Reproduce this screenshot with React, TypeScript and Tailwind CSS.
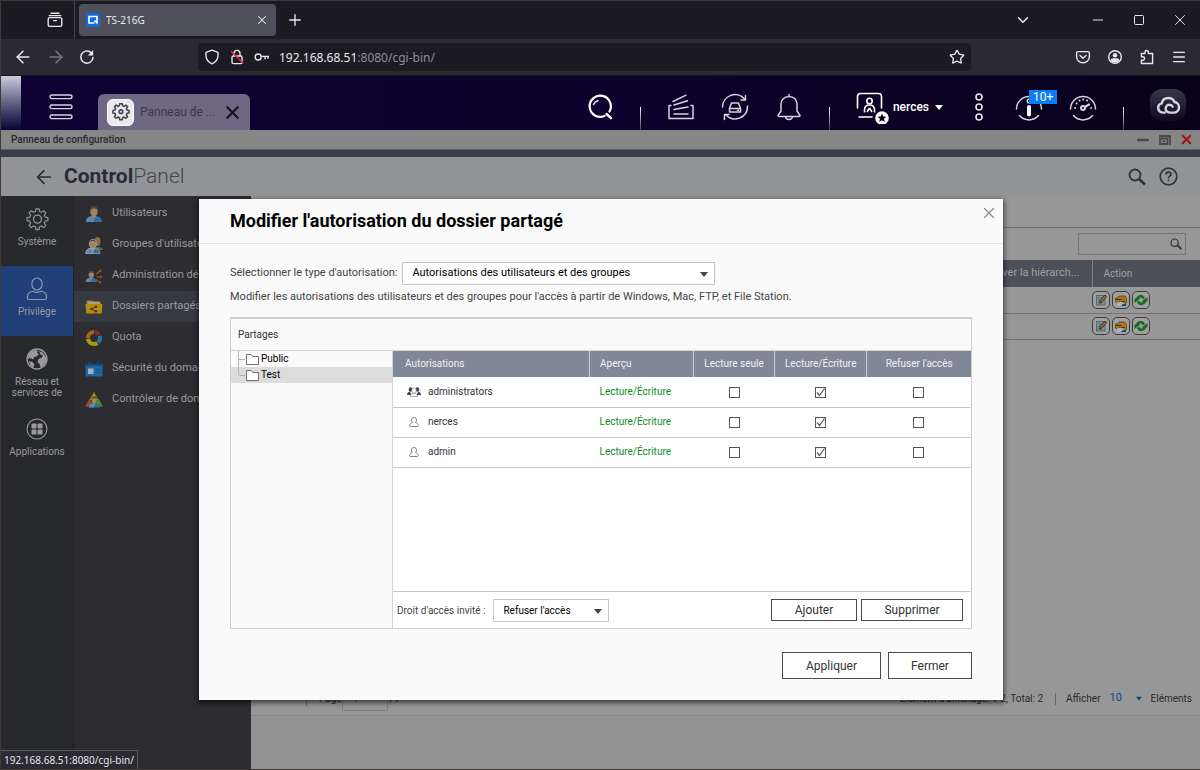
import { useState } from "react";
import type { ReactNode } from "react";
import {
  ArrowLeft,
  ArrowRight,
  ChevronDown,
  Menu,
  Minus,
  Plus,
  Square,
  Star,
  X,
} from "lucide-react";

type Member = {
  name: string;
  group?: boolean;
};

const members: Member[] = [
  { name: "administrators", group: true },
  { name: "nerces" },
  { name: "admin" },
];

/* ---------- browser icons ---------- */

function RecentIcon() {
  return (
    <svg width="16" height="16" viewBox="0 0 16 16" fill="none" stroke="currentColor" strokeWidth="1.4">
      <path d="M4 1.2h8M2.2 3.6h11.6" strokeLinecap="round" />
      <rect x="1.2" y="5.6" width="13.6" height="8.8" rx="1.6" />
      <path d="M6.6 8.6h2.8" strokeLinecap="round" />
    </svg>
  );
}

function ReloadIcon() {
  return (
    <svg width="16" height="16" viewBox="0 0 16 16" fill="none" stroke="currentColor" strokeWidth="1.5">
      <path d="M14 8.4A6.1 6.1 0 1 1 11.6 3.2" strokeLinecap="round" />
      <path d="M14.2 1v5.4H8.8z" fill="currentColor" stroke="none" />
    </svg>
  );
}

function ShieldIcon() {
  return (
    <svg width="16" height="16" viewBox="0 0 16 16" fill="none" stroke="currentColor" strokeWidth="1.4">
      <path d="M8 1.2 14 3.4v3.2c0 3.8-2.4 6.6-6 8.2-3.6-1.6-6-4.4-6-8.2V3.4z" strokeLinejoin="round" />
    </svg>
  );
}

function InsecureIcon() {
  return (
    <svg width="16" height="16" viewBox="0 0 16 16" fill="none" stroke="currentColor" strokeWidth="1.4">
      <path d="M5 7V4.4a3 3 0 0 1 6 0V7" />
      <rect x="3" y="7" width="10" height="7.6" rx="1.4" />
      <path d="M2.4 2.6 14 14" stroke="#e22850" strokeWidth="1.5" strokeLinecap="round" />
    </svg>
  );
}

function KeyIcon() {
  return (
    <svg width="16" height="16" viewBox="0 0 16 16" fill="none" stroke="currentColor" strokeWidth="1.4">
      <circle cx="4.2" cy="8" r="3" />
      <path d="M7.2 7.4H15M11 7.4v2.8M14 7.4v2.4" />
    </svg>
  );
}

function PocketIcon() {
  return (
    <svg width="16" height="16" viewBox="0 0 16 16" fill="none" stroke="currentColor" strokeWidth="1.4">
      <path d="M3 2.6h10c.8 0 1.4.6 1.4 1.4v3.4a6.4 6.4 0 0 1-12.8 0V4c0-.8.6-1.4 1.4-1.4z" />
      <path d="m5 6.4 3 2.8 3-2.8" strokeLinecap="round" />
    </svg>
  );
}

function AccountIcon() {
  return (
    <svg width="16" height="16" viewBox="0 0 16 16" fill="none" stroke="currentColor" strokeWidth="1.4">
      <circle cx="8" cy="8" r="6.3" />
      <circle cx="8" cy="6.2" r="2.2" fill="currentColor" stroke="none" />
      <path d="M3.8 11.4c0-1.4 1-2.2 2.2-2.2h4c1.2 0 2.2.8 2.2 2.2-1 1.2-2.4 2-4.2 2s-3.2-.8-4.2-2z" fill="currentColor" stroke="none" />
    </svg>
  );
}

function PuzzleIcon() {
  return (
    <svg width="16" height="16" viewBox="0 0 16 16" fill="none" stroke="currentColor" strokeWidth="1.4">
      <path
        d="M6 4.5V3.2a1.7 1.7 0 0 1 3.4 0v1.3h4.2v10H2.4v-3.3h1.5a1.7 1.7 0 0 0 0-3.4H2.4V4.5z"
        strokeLinejoin="round"
      />
    </svg>
  );
}

/* ---------- desktop bar icons ---------- */

function DeskIcon({ children }: { children: ReactNode }) {
  return (
    <svg
      width="28"
      height="28"
      viewBox="0 0 28 28"
      fill="none"
      stroke="currentColor"
      strokeWidth="1.5"
      strokeLinecap="round"
      strokeLinejoin="round"
    >
      {children}
    </svg>
  );
}

function DeskSearch() {
  return (
    <DeskIcon>
      <path d="M23.5 18.5A10.6 10.6 0 1 0 18.5 23" stroke="#fff" strokeWidth="2.2" />
      <path d="M20.5 21 25 25.2" stroke="#fff" strokeWidth="2.4" />
      <path d="M7.5 11.5A6.5 6.5 0 0 1 12 7.6" strokeWidth="1.6" />
    </DeskIcon>
  );
}

function DeskStack() {
  return (
    <DeskIcon>
      <path d="M4 12.5H2v13h24v-13h-2" />
      <path d="M6 8.5 19 2.2M7 12l13.5-4.2M7 16.5l14-2.5M7 21h14" />
    </DeskIcon>
  );
}

function DeskSync() {
  return (
    <DeskIcon>
      <path d="M1.5 14A12.5 12.5 0 0 1 23.5 6M24.5 2.5v4.6h-4.6" />
      <path d="M26.5 13A12.5 12.5 0 0 1 5 22M3.5 26.4v-4.8h4.6" />
      <path d="M8.5 15.5 10.5 10h7l2 5.5V19h-11z" />
      <path d="M8.5 15.5h11M16.5 17.3h1" />
    </DeskIcon>
  );
}

function DeskBell() {
  return (
    <DeskIcon>
      <path d="M14 1.5v2M14 3.5c-5 0-8 3.5-8 8V18l-3 4.5c0 .6.3 1 1 1h20c.7 0 1-.4 1-1L22 18v-6.5c0-4.5-3-8-8-8z" />
      <path d="M10.5 24c.5 1.5 1.8 2.4 3.5 2.4s3-.9 3.5-2.4" />
    </DeskIcon>
  );
}

function DeskUser() {
  return (
    <svg width="33" height="34" viewBox="0 0 33 34" fill="none" stroke="currentColor" strokeWidth="1.6">
      <path d="M1.5 18V6.5c0-2 1-3 3-3h18c2 0 3 1 3 3V18M3 27h13" strokeLinecap="round" />
      <circle cx="13.5" cy="11" r="2.7" />
      <path d="M8.5 22.5V20c0-3 2-5 5-5s5 2 5 5v2.5M13.5 18 11 22M13.5 18l2.5 4" />
      <circle cx="26" cy="28" r="6" fill="#fff" stroke="#fff" />
      <path
        d="m26 23.500 1.300 3 3.200.2-2.500 2.100.9 3.200-2.900-1.800-2.900 1.800.9-3.200-2.500-2.100 3.200-.2z"
        fill="#0a0128"
        stroke="none"
      />
    </svg>
  );
}

function DeskInfo() {
  return (
    <DeskIcon>
      <path d="M1.5 16A12.5 12.5 0 0 1 26.5 16M4.5 22.5a12.5 12.5 0 0 0 19 0" />
      <path d="M14 14v7.5" stroke="#fff" strokeWidth="4" />
      <circle cx="14" cy="8" r="1.8" />
    </DeskIcon>
  );
}

function DeskGauge() {
  return (
    <DeskIcon>
      <path d="M1.5 16A12.5 12.5 0 0 1 26.5 16M4.5 22.5a12.5 12.5 0 0 0 19 0" />
      <circle cx="14" cy="15" r="2" strokeWidth="2" />
      <path d="m16 14 4-2.5" strokeWidth="2.2" />
      <path d="M6 15h.2M7.5 10.5h.2M10.5 7.5h.2M14 6.500h.2M18 7.500h.2M22 15h.2" strokeWidth="1.8" />
    </DeskIcon>
  );
}

function CloudIcon() {
  return (
    <svg width="25" height="19" viewBox="0 0 26 20" fill="none" stroke="#d6d4dc" strokeWidth="2.6" strokeLinecap="round">
      <path d="M9 17.5H7a5 5 0 0 1-1.2-9.8C6.500 4.200 9.300 2 12.800 2c3 0 5.500 1.700 6.600 4.400a5.600 5.600 0 0 1-.4 11.100h-3.500c-3.500 0-5.500-1.700-5.500-4.300 0-2.400 1.800-4 4-4 1.700 0 2.800.8 3.300 2" />
    </svg>
  );
}

function Divider() {
  return <span className="mt-6 h-6 w-px bg-gradient-to-b from-white to-white/20" />;
}

/* ---------- control panel icons ---------- */

function Gear({ size, color, bold = false }: { size: number; color: string; bold?: boolean }) {
  return (
    <svg
      width={size}
      height={size}
      viewBox="0 0 24 24"
      fill="none"
      stroke={color}
      strokeWidth={bold ? 2.2 : 1.4}
      strokeLinejoin="round"
    >
      <path d="M10.300 1.500h3.400l.6 3 2 .9 2.600-1.700 2.400 2.400-1.700 2.600.9 2 3 .6v3.400l-3 .6-.9 2 1.700 2.600-2.400 2.400-2.600-1.700-2 .9-.6 3h-3.400l-.6-3-2-.9-2.600 1.700-2.400-2.400 1.700-2.600-.9-2-3-.6v-3.400l3-.6.9-2-1.700-2.600 2.400-2.400 2.600 1.700 2-.9z" transform="translate(.7 -.6) scale(.94)" />
      <circle cx="12" cy="11.600" r={bold ? 2.4 : 4.2} />
    </svg>
  );
}

function PersonOutline() {
  return (
    <svg width="22" height="24" viewBox="0 0 22 24" fill="none" stroke="#8b99b5" strokeWidth="1.2">
      <ellipse cx="11" cy="7" rx="5.2" ry="6" />
      <path d="M1.500 21v-1.500c0-3 2-4.500 4.500-5 1.600-.3 2.500.8 5 .8s3.400-1.100 5-.8c2.500.5 4.500 2 4.500 5V21c0 1-.5 1.500-1.500 1.500H3c-1 0-1.500-.5-1.500-1.500z" />
    </svg>
  );
}

function Globe() {
  return (
    <svg width="22" height="22" viewBox="0 0 22 22">
      <circle cx="11" cy="11" r="10" fill="#28292c" stroke="#9a9a9b" strokeWidth="1.4" />
      <path d="M4 4.500 8 2l4 .5-1 2.500 2 1-2.500 2.500L8 9l-.5 2.500L4.500 10 2 11c0-2.500.5-4.500 2-6.500zM13 3l3.500 1.500L20 9l.5 4-2.500 4-3 3-1.500-4-2-2 1-3 3.500-1.500 1-2-2.500-1zM3 13l3.500 1 2 2.500L7 20c-2-1.500-3.500-3.500-4-7z" fill="#9a9a9b" />
    </svg>
  );
}

function AppsIcon() {
  return (
    <svg width="22" height="22" viewBox="0 0 22 22" fill="#9a9a9b">
      <circle cx="11" cy="11" r="10" fill="none" stroke="#9a9a9b" strokeWidth="1.1" />
      <rect x="5.5" y="5.5" width="5" height="5" rx=".8" />
      <rect x="11.5" y="5.5" width="5" height="5" rx=".8" />
      <rect x="5.5" y="11.5" width="5" height="5" rx=".8" />
      <rect x="11.5" y="11.5" width="5" height="5" rx=".8" />
    </svg>
  );
}

function Figure() {
  return (
    <>
      <path d="M1 17c0-4 2.500-6 8-6s8 2 8 6z" fill="#2f6ea3" />
      <path d="M1 17c0-4 2.500-6 8-6v6z" fill="#5b87ab" />
      <path d="m6.500 11 2.500 3 2.500-3z" fill="#9a8468" />
      <ellipse cx="9" cy="6.500" rx="3.800" ry="4.800" fill="#9a8468" />
      <path d="M5 6c0-3.500 1.500-5 4-5s4 1.500 4 5c-1-1.500-2-2.500-4-2.500S6 4.500 5 6z" fill="#60452c" />
    </>
  );
}

function UserIcon() {
  return (
    <svg width="18" height="18" viewBox="0 0 18 18">
      <Figure />
    </svg>
  );
}

function GroupIcon() {
  return (
    <svg width="18" height="18" viewBox="0 0 18 18">
      <path d="M10 11c5 0 8 1 8 3h-6z" fill="#4c7a2a" />
      <ellipse cx="12.5" cy="5.5" rx="3" ry="4.5" fill="#8c6a42" />
      <g transform="translate(0 2.5) scale(.88)" stroke="#a9aaa8" strokeWidth=".8">
        <Figure />
      </g>
    </svg>
  );
}

function DelegateIcon() {
  return (
    <svg width="18" height="18" viewBox="0 0 18 18">
      <g transform="translate(0 3) scale(.7)">
        <Figure />
      </g>
      <g stroke="#9c5a17" strokeWidth="1.2" fill="#9c5a17">
        <path d="m11 7 4.500-3.500M11.500 10H16M11 12.500l4.500 3" />
        <path d="m16.500 2.500-.5 2.800-2-2.300zM17.500 10l-2.200 1.500v-3zM16.500 16.500l-2.600-.5 1.700-2z" stroke="none" />
      </g>
    </svg>
  );
}

function SharedFolderIcon() {
  return (
    <svg width="18" height="18" viewBox="0 0 18 18">
      <path d="M1.500 2.500H7L8.500 4H16v5H1.500z" fill="#a07a18" />
      <path d="M2.500 3.500h12v3h-12z" fill="#b09a80" />
      <path d="M.5 6h17l-.8 9.500H1.300z" fill="#b48c12" />
      <path d="m11 8.800-4.500 2.200 4.500 2.200" fill="none" stroke="#4a3608" />
      <g fill="#4a3608">
        <circle cx="11" cy="8.8" r="1.3" />
        <circle cx="6.5" cy="11" r="1.3" />
        <circle cx="11" cy="13.2" r="1.3" />
      </g>
    </svg>
  );
}

function QuotaIcon() {
  return (
    <svg width="18" height="18" viewBox="0 0 18 18" fill="none" strokeWidth="4">
      <path d="M9 3a6 6 0 0 0-6 6" stroke="#a8641c" />
      <path d="M9.800 3A6 6 0 0 1 13.800 5.500" stroke="#922626" />
      <path d="M14.500 6.800a6 6 0 0 1-1.500 6.700" stroke="#23779b" />
      <path d="M12.300 14A6 6 0 0 1 3 9.800" stroke="#a59a12" />
    </svg>
  );
}

function DomainIcon() {
  return (
    <svg width="18" height="18" viewBox="0 0 18 18">
      <path d="M3 1.500h3v4H3zM12 1.500h3v4h-3z" fill="#163f63" />
      <path d="M.5 4h17v12.500H.5z" fill="#1f66a4" />
      <path d="M.5 4h17v2H.5z" fill="#174d7e" />
      <path d="M3 8.500h5.500V14H3z" fill="#9db0bf" />
      <path d="M10.500 9.500h5M10.500 12h5" stroke="#1b5789" />
    </svg>
  );
}

function ControllerIcon() {
  return (
    <svg width="18" height="18" viewBox="0 0 18 18">
      <path d="M9 1 13.500 9h-9z" fill="#a38f16" />
      <path d="m4.500 7.500 4.500 8H0z" fill="#9a4d18" />
      <path d="m13.500 7.500 4.500 8H9z" fill="#4f8a22" />
      <g transform="translate(3 4.500) scale(.7)">
        <Figure />
      </g>
    </svg>
  );
}

function Magnifier({ size }: { size: number }) {
  return (
    <svg width={size} height={size} viewBox="0 0 18 18" fill="none" stroke="#303238">
      <circle cx="7" cy="7" r="5.5" strokeWidth="1.8" />
      <path d="m11 11 6 5.500" strokeWidth="2.6" />
    </svg>
  );
}

function Caret({ className }: { className?: string }) {
  return (
    <svg width="8" height="5" viewBox="0 0 8 5" className={className} fill="currentColor">
      <path d="M0 0h8L4 5z" />
    </svg>
  );
}

/* ---------- list actions ---------- */

function ActionButton({ label, children }: { label: string; children: ReactNode }) {
  return (
    <button
      type="button"
      aria-label={label}
      className="flex size-[18px] items-center justify-center rounded-[5px] border border-[#3d3d3d] bg-[#a0a0a0]"
    >
      <svg width="14" height="14" viewBox="0 0 14 14">
        {children}
      </svg>
    </button>
  );
}

function RowActions() {
  return (
    <div className="flex gap-[2px]">
      <ActionButton label="Modifier">
        <rect x="2.500" y="2.500" width="8.500" height="9.500" fill="#7c9098" stroke="#4f6a75" />
        <path d="M4 5h4M4 7.500h3M4 10h4" stroke="#4f7282" />
        <path d="m5.500 10 .7-2.700L11 2l1.700 1.500-4.800 5.500z" fill="#a36a1e" stroke="#2d2212" strokeWidth=".8" />
      </ActionButton>
      <ActionButton label="Autorisations">
        <path d="M1.500 5h2.500l1-2h6l1.500 2.500v4.500l-3 2H6l-4.500-3z" fill="#a8741c" stroke="#4f3a12" strokeWidth=".7" />
        <path d="M1.500 6.500h6M5 8.500h6" stroke="#4a3510" />
        <path d="m3 9.500 4-1 4 2.500-4 2H3z" fill="#a9b3bb" />
        <path d="M9 11h3v2H7z" fill="#24476e" />
      </ActionButton>
      <ActionButton label="Actualiser">
        <path d="M3 6.500C4 2.500 8 2 10 5.500M11 7.500c-1 4-5 4.500-7 1" fill="none" stroke="#166a22" strokeWidth="2.600" />
        <path d="M13.500 4v4.500H7.500zM.5 10V5.500h6z" fill="#166a22" />
      </ActionButton>
    </div>
  );
}

/* ---------- dialog pieces ---------- */

function FolderIcon() {
  return (
    <svg width="13" height="11" viewBox="0 0 13 11" fill="#fff" stroke="#707070">
      <path d="M.5.5H5l1.500 2h6v8H.5z" />
    </svg>
  );
}

function MemberIcon({ group }: { group?: boolean }) {
  if (group) {
    return (
      <svg width="14" height="10" viewBox="0 0 14 10">
        <ellipse cx="3.500" cy="2.500" rx="1.800" ry="2.200" fill="#444" />
        <ellipse cx="10.500" cy="2.500" rx="1.800" ry="2.200" fill="#444" />
        <path d="M0 8c0-2 1-3 3-3.200L4.500 8zM14 8c0-2-1-3-3-3.200L9.500 8z" fill="#444" />
        <ellipse cx="7" cy="3.500" rx="2.200" ry="2.700" fill="#fff" stroke="#888" strokeWidth=".7" />
        <path d="M3.500 9.500c0-2 1-3 3.500-3s3.500 1 3.500 3z" fill="#fff" stroke="#888" strokeWidth=".7" />
      </svg>
    );
  }
  return (
    <svg width="14" height="10" viewBox="0 0 14 10" fill="none" stroke="#777" strokeWidth=".9">
      <path d="M5.500 5.500C4.800 4.800 4.500 4 4.500 3a2.500 2.500 0 0 1 5 0c0 1-.3 1.800-1 2.500 1.800.5 2.800 1.300 2.800 3 0 .7-.3 1-.8 1h-7c-.5 0-.8-.3-.8-1 0-1.700 1-2.500 2.800-3z" />
    </svg>
  );
}

function Tick({ label, initial = false }: { label: string; initial?: boolean }) {
  const [on, setOn] = useState(initial);
  return (
    <span className="relative inline-block size-[11px] align-middle">
      <input
        type="checkbox"
        aria-label={label}
        checked={on}
        onChange={() => setOn(!on)}
        className="block size-[11px] appearance-none border border-[#555] bg-white"
      />
      {on && (
        <svg viewBox="0 0 11 11" className="pointer-events-none absolute inset-0" fill="none" stroke="#555" strokeWidth="1.2">
          <path d="M2 5.500 4.500 8.500 9.500 1.500" />
        </svg>
      )}
    </span>
  );
}

const th = "border-l border-[#c9ccd2] text-center font-normal";

function PermissionTable() {
  return (
    <table className="w-full table-fixed border-collapse text-[10px] leading-4 text-[#333]">
      <colgroup>
        <col className="w-[34%]" />
        <col className="w-[18%]" />
        <col className="w-[14%]" />
        <col className="w-[16%]" />
        <col className="w-[18%]" />
      </colgroup>
      <thead>
        <tr className="h-[26px] bg-[#808797] text-[#f0f1f3]">
          <th className="pl-3 text-left font-normal">Autorisations</th>
          <th className="border-l border-[#c9ccd2] pl-[10px] text-left font-normal">Aperçu</th>
          <th className={th}>Lecture seule</th>
          <th className={th}>Lecture/Écriture</th>
          <th className={th}>Refuser l'accès</th>
        </tr>
      </thead>
      <tbody>
        {members.map((m) => (
          <tr key={m.name} className="h-[30px] border-b border-[#c8c8c8]">
            <td className="pl-[14px]">
              <span className="flex items-center gap-[7px]">
                <MemberIcon group={m.group} />
                {m.name}
              </span>
            </td>
            <td className="pl-[10px] text-[#0c8c1c]">Lecture/Écriture</td>
            <td className="text-center">
              <Tick label={`Lecture seule ${m.name}`} />
            </td>
            <td className="text-center">
              <Tick label={`Lecture/Écriture ${m.name}`} initial />
            </td>
            <td className="text-center">
              <Tick label={`Refuser l'accès ${m.name}`} />
            </td>
          </tr>
        ))}
      </tbody>
    </table>
  );
}

const outlined = "border border-[#4a4a4a] bg-white text-xs text-[#333]";

function PermissionDialog() {
  return (
    <div
      role="dialog"
      aria-labelledby="dialog-title"
      className="w-full max-w-[804px] bg-[#fafafa] pb-[21px] text-[#444] shadow-[0_2px_5px_1px_rgba(0,0,0,0.6)]"
    >
      <div className="flex h-[45px] items-center justify-between border-b border-[#e4e4e4] pl-[31px] pr-[5px]">
        <h2 id="dialog-title" className="text-lg font-bold text-black">
          Modifier l'autorisation du dossier partagé
        </h2>
        <button type="button" aria-label="Fermer la fenêtre" className="mb-4 text-[#888]">
          <X size={18} strokeWidth={1.5} />
        </button>
      </div>

      <div className="px-[31px] pt-[18px] text-[11px]">
        <div className="flex items-center gap-[5px]">
          <label htmlFor="type">Sélectionner le type d'autorisation:</label>
          <div className="relative w-[313px]">
            <select
              id="type"
              className="block h-[23px] w-full appearance-none border border-[#c4c4c4] bg-white pl-[9px] text-[11px] text-black"
            >
              <option>Autorisations des utilisateurs et des groupes</option>
            </select>
            <Caret className="pointer-events-none absolute right-[7px] top-[10px] text-[#444]" />
          </div>
        </div>
        <p className="h-6 leading-6">
          Modifier les autorisations des utilisateurs et des groupes pour l'accès à partir de Windows, Mac, FTP, et File
          Station.
        </p>

        <div className="mt-2 border border-t-2 border-[#cfcfcf] text-[10px]">
          <div className="h-8 border-b border-[#d4d4d4] pl-[7px] leading-8 text-[#333]">Partages</div>
          <div className="flex">
            <ul className="w-[161px] shrink-0 leading-4 text-black">
              <li className="flex h-4 items-center pl-[7px]">
                <span className="h-full w-px bg-[#b5b5b5]" />
                <span className="mr-px h-px w-[6px] bg-[#b5b5b5]" />
                <FolderIcon />
                <span className="ml-[2px]">Public</span>
              </li>
              <li className="flex h-4 items-center bg-[#dcdcdc] pl-[7px]">
                <span className="h-2 w-px self-start bg-[#b5b5b5]" />
                <span className="mr-px h-px w-[6px] bg-[#b5b5b5]" />
                <FolderIcon />
                <span className="ml-[2px]">Test</span>
              </li>
            </ul>
            <div className="min-w-0 flex-1 border-l border-[#d4d4d4] bg-white">
              <div className="h-[240px]">
                <PermissionTable />
              </div>
              <div className="flex h-[37px] items-center border-t border-[#c8c8c8] pl-1 pr-2">
                <label htmlFor="guest">Droit d'accès invité :</label>
                <div className="relative ml-2 w-[116px]">
                  <select
                    id="guest"
                    className="block h-[23px] w-full appearance-none border border-[#c4c4c4] bg-white pl-[9px] text-[10px] text-black"
                  >
                    <option>Refuser l'accès</option>
                  </select>
                  <Caret className="pointer-events-none absolute right-[7px] top-[10px] text-[#444]" />
                </div>
                <button type="button" className={`${outlined} ml-auto h-[22px] w-[86px]`}>
                  Ajouter
                </button>
                <button type="button" className={`${outlined} ml-1 h-[22px] w-[102px]`}>
                  Supprimer
                </button>
              </div>
            </div>
          </div>
        </div>

        <div className="mt-[23px] flex justify-end gap-[7px]">
          <button type="button" className={`${outlined} h-[27px] w-[99px]`}>
            Appliquer
          </button>
          <button type="button" className={`${outlined} h-[27px] w-[84px]`}>
            Fermer
          </button>
        </div>
      </div>
    </div>
  );
}

/* ---------- page sections ---------- */

function BrowserChrome() {
  return (
    <header className="font-['Noto_Sans',sans-serif] text-[#e8e8ec]">
      <div className="flex h-[38px] items-center bg-[#1c1b22]">
        <button type="button" aria-label="Onglets récents" className="flex h-full w-[74px] items-center justify-end border-r border-[#45444d] pr-[11px]">
          <RecentIcon />
        </button>
        <div className="ml-1 flex h-8 w-[197px] items-center rounded bg-[#50505c] px-[7px] text-[10px]">
          <svg width="14" height="14" viewBox="0 0 14 14">
            <rect width="14" height="14" rx="2.5" fill="#0c6be0" />
            <path d="M8.500 10H3V3.500h8V9.500M8.500 7.500l3 3" fill="none" stroke="#fff" strokeWidth="1.6" />
          </svg>
          <span className="ml-[6px]">TS-216G</span>
          <button type="button" aria-label="Fermer l'onglet" className="ml-auto">
            <X size={14} strokeWidth={1.8} />
          </button>
        </div>
        <button type="button" aria-label="Nouvel onglet" className="ml-[10px]">
          <Plus size={18} strokeWidth={1.8} />
        </button>
        <div className="ml-auto flex items-center pr-3">
          <button type="button" aria-label="Lister les onglets" className="mr-[58px]">
            <ChevronDown size={18} />
          </button>
          <div className="flex gap-[25px]">
            <button type="button" aria-label="Réduire">
              <Minus size={16} strokeWidth={1.5} />
            </button>
            <button type="button" aria-label="Agrandir">
              <Square size={12} strokeWidth={2} className="mx-[2px]" />
            </button>
            <button type="button" aria-label="Fermer">
              <X size={18} strokeWidth={1.3} className="-mx-px" />
            </button>
          </div>
        </div>
      </div>

      <div className="flex h-[37px] items-center border-b border-[#15141a] bg-[#2b2a33] pl-3 pr-[13px]">
        <div className="flex items-center gap-[13px]">
          <button type="button" aria-label="Précédent">
            <ArrowLeft size={20} strokeWidth={1.8} />
          </button>
          <button type="button" aria-label="Suivant" className="text-[#77767e]">
            <ArrowRight size={20} strokeWidth={1.8} />
          </button>
          <button type="button" aria-label="Recharger">
            <ReloadIcon />
          </button>
        </div>
        <div className="ml-[103px] mr-[104px] flex h-7 flex-1 items-center gap-[9px] rounded bg-[#1c1b22] px-[6px]">
          <ShieldIcon />
          <InsecureIcon />
          <KeyIcon />
          <a href="#" className="pt-px text-xs text-[#e8e8ec]">
            192.168.68.51<span className="text-[#8f8e97]">:8080/cgi-bin/</span>
          </a>
          <Star size={16} className="ml-auto" />
        </div>
        <div className="flex gap-4">
          <PocketIcon />
          <AccountIcon />
          <PuzzleIcon />
          <Menu size={16} />
        </div>
      </div>
    </header>
  );
}

function DesktopBar() {
  return (
    <div className="flex h-[54px] items-center bg-gradient-to-r from-[#0d0233] via-[#0d022d] to-[#08011b] text-[#d5d3dd]">
      <div className="h-full w-5 bg-gradient-to-b from-[#cfccdc] to-[#0d0233]" />
      <button type="button" aria-label="Menu principal" className="ml-7 mt-2">
        <svg width="24" height="26" viewBox="0 0 24 26" fill="none" stroke="currentColor" strokeWidth="1.4">
          <rect x="1" y="1" width="22" height="3.6" rx="1.8" />
          <rect x="1" y="11" width="22" height="3.6" rx="1.8" />
          <rect x="1" y="21" width="22" height="3.6" rx="1.8" />
        </svg>
      </button>
      <div className="ml-[25px] flex h-9 w-[152px] items-center self-end rounded-t-md bg-[#6f6884] px-[9px]">
        <span className="flex size-[27px] items-center justify-center rounded-md border border-white bg-[#e9e9ee]">
          <Gear size={18} color="#43454c" bold />
        </span>
        <span className="ml-[6px] text-xs text-[#3b3747]">Panneau de ...</span>
        <button type="button" aria-label="Fermer l'application" className="-mr-[2px] ml-auto text-[#15131d]">
          <X size={21} strokeWidth={2.5} />
        </button>
      </div>

      <div className="ml-auto flex h-full items-center gap-[26px] pr-[14px] pt-2">
        <DeskSearch />
        <Divider />
        <DeskStack />
        <DeskSync />
        <DeskBell />
        <Divider />
        <button type="button" className="flex items-center gap-1 text-xs font-medium text-white">
          <DeskUser />
          nerces
          <Caret className="ml-[2px]" />
        </button>
        <svg width="20" height="28" viewBox="0 0 20 28" fill="none" stroke="#e6e4ee" strokeWidth="1.6">
          <circle cx="10" cy="4" r="3" />
          <circle cx="10" cy="14" r="3" />
          <circle cx="10" cy="24" r="3" />
        </svg>
        <span className="relative">
          <DeskInfo />
          <span className="absolute -top-[3px] left-[14px] h-[14px] bg-[#0a7cf5] px-1 text-xs leading-[14px] text-white">
            10+
          </span>
        </span>
        <DeskGauge />
        <Divider />
        <span className="-mt-1 flex h-8 w-9 items-center justify-center rounded-xl bg-gradient-to-b from-[#3b3748] to-[#0f0822]">
          <CloudIcon />
        </span>
      </div>
    </div>
  );
}

const rail: { label: string; icon: ReactNode; active?: boolean }[] = [
  { label: "Système", icon: <Gear size={23} color="#929393" /> },
  { label: "Privilège", icon: <PersonOutline />, active: true },
  { label: "Réseau et services de", icon: <Globe /> },
  { label: "Applications", icon: <AppsIcon /> },
];

const submenu: { label: string; icon: ReactNode; active?: boolean }[] = [
  { label: "Utilisateurs", icon: <UserIcon /> },
  { label: "Groupes d'utilisateurs", icon: <GroupIcon /> },
  { label: "Administration déléguée", icon: <DelegateIcon /> },
  { label: "Dossiers partagés", icon: <SharedFolderIcon />, active: true },
  { label: "Quota", icon: <QuotaIcon /> },
  { label: "Sécurité du domaine", icon: <DomainIcon /> },
  { label: "Contrôleur de domaine", icon: <ControllerIcon /> },
];

function Sidebar() {
  return (
    <div className="flex w-[250px] shrink-0 bg-[#2d2c31] text-[#9a9a9c]">
      <nav className="w-[72px] shrink-0 bg-[#27282b]">
        {rail.map((item) => (
          <a
            key={item.label}
            href="#"
            className={`flex h-[70px] flex-col items-center pt-3 text-center text-[10px] leading-[11px] ${
              item.active ? "bg-[#213f78]" : ""
            }`}
          >
            <span className="mb-[6px] flex h-[22px] items-center">{item.icon}</span>
            <span className="w-14">{item.label}</span>
          </a>
        ))}
      </nav>
      <nav className="min-w-0 flex-1 border-l border-[#222326] pt-[2px]">
        {submenu.map((item) => (
          <a
            key={item.label}
            href="#"
            className={`flex h-[31px] items-center gap-[9px] whitespace-nowrap pl-[11px] text-[11px] ${
              item.active ? "bg-[#363940]" : ""
            }`}
          >
            <span className="shrink-0">{item.icon}</span>
            <span>{item.label}</span>
          </a>
        ))}
      </nav>
    </div>
  );
}

function FolderList() {
  return (
    <section className="flex min-w-0 flex-1 flex-col bg-[#979797] text-[10px] text-[#2b2b2b]">
      <div className="h-8 border-b border-[#6f6f6f]" />
      <div className="flex h-8 items-center justify-end pr-[14px]">
        <div className="relative w-[108px]">
          <input
            type="search"
            aria-label="Rechercher un dossier"
            className="block h-[22px] w-full border border-[#757575] bg-transparent px-1"
          />
          <span className="pointer-events-none absolute right-1 top-[5px]">
            <Magnifier size={12} />
          </span>
        </div>
      </div>
      <table className="w-full table-fixed border-collapse">
        <colgroup>
          <col />
          <col className="w-[108px]" />
        </colgroup>
        <thead>
          <tr className="h-[27px] bg-[#4b5059] text-[#9fa1a5]">
            <th className="pr-3 text-right text-[11px] font-normal">Conserver la hiérarch...</th>
            <th className="border-l border-[#7b7e84] pl-[11px] text-left font-normal">Action</th>
          </tr>
        </thead>
        <tbody>
          {["Public", "Test"].map((name) => (
            <tr key={name} className="h-[26px] border-b border-[#717171]">
              <td />
              <td>
                <RowActions />
              </td>
            </tr>
          ))}
        </tbody>
      </table>
      <div className="mt-auto flex h-[34px] items-center border-b border-[#858585] pr-2">
        <label htmlFor="page" className="ml-[55px] border-l border-[#6f6f6f] pl-3">
          Page
        </label>
        <input id="page" defaultValue="1" className="h-6 w-[46px] border border-[#808080] bg-transparent pl-[10px] text-[#0b4a80]" />
        <span className="ml-[2px]">/1</span>
        <span className="ml-auto">Élément d'affichage: 1-2, Total: 2</span>
        <span className="ml-3 h-3 w-px bg-[#666]" />
        <label htmlFor="count" className="ml-[10px]">
          Afficher
        </label>
        <div className="relative ml-[9px] w-8">
          <select id="count" className="block w-full appearance-none bg-transparent text-[11px] text-[#0b4a80]">
            <option>10</option>
          </select>
          <Caret className="pointer-events-none absolute right-0 top-[6px] w-[6px] text-[#0b4a80]" />
        </div>
        <span className="ml-[9px]">Eléments</span>
      </div>
      <div className="h-[53px] bg-[#939393]" />
    </section>
  );
}

export default function App() {
  return (
    <div className="flex min-h-screen flex-col border-b border-l border-t border-[#3f3a38] bg-[#1c1b22] font-[Roboto,sans-serif]">
      <BrowserChrome />
      <DesktopBar />
      <main className="relative flex flex-1 flex-col">
        <div className="flex h-5 items-center justify-between border-b border-[#5b5e66] bg-[#868686] pl-[10px] pr-[6px]">
          <span className="text-[10px] font-medium text-[#2a2a2a]">Panneau de configuration</span>
          <div className="flex items-center gap-2 text-[#45484f]">
            <button type="button" aria-label="Réduire la fenêtre">
              <Minus size={16} strokeWidth={4} />
            </button>
            <button type="button" aria-label="Restaurer la fenêtre">
              <svg width="12" height="10" viewBox="0 0 12 10" fill="none" stroke="currentColor" strokeWidth="1.8">
                <path d="M0 1h11v9" />
                <path d="M1 3.500h7.500v5.500H1z" />
                <path d="M3.500 6.300h2.500" />
              </svg>
            </button>
            <button type="button" aria-label="Fermer le panneau" className="text-[#a01818]">
              <X size={15} strokeWidth={3.5} />
            </button>
          </div>
        </div>
        <div className="h-[7px] bg-[#3a3d49]" />
        <div className="flex h-[39px] items-center bg-[#929498] pl-8 pr-[22px] text-[#2a2b38]">
          <button type="button" aria-label="Retour">
            <ArrowLeft size={22} strokeWidth={1.8} />
          </button>
          <h1 className="ml-[9px] text-[21px]">
            <span className="font-bold">Control</span>
            <span className="font-light text-[#44464f]">Panel</span>
          </h1>
          <div className="ml-auto flex items-center gap-[13px]">
            <button type="button" aria-label="Rechercher">
              <Magnifier size={18} />
            </button>
            <button type="button" aria-label="Aide">
              <svg width="19" height="19" viewBox="0 0 19 19" fill="none" stroke="#303238" strokeWidth="1.7">
                <circle cx="9.5" cy="9.5" r="8.3" />
                <path d="M7 7.500c0-1.500 1-2.400 2.500-2.400S12 6 12 7.300c0 1.700-2.500 1.900-2.500 4M9.500 12.500v1.800" />
              </svg>
            </button>
          </div>
        </div>
        <div className="flex flex-1">
          <Sidebar />
          <FolderList />
        </div>

        <div className="absolute inset-0 flex items-center justify-center pl-px">
          <PermissionDialog />
        </div>
        <div className="absolute bottom-0 left-0 border-r border-t border-[#5a5a60] bg-[#2b2a31] px-[3px] font-['Noto_Sans',sans-serif] text-[10px] leading-[18px] text-[#e6e6ea]">
          192.168.68.51:8080/cgi-bin/
        </div>
      </main>
    </div>
  );
}
